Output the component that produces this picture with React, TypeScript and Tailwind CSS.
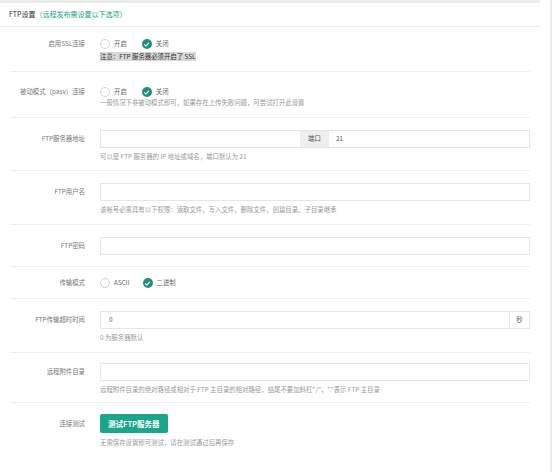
import React from 'react';

const GREEN = 'bg-[#1ba58a]';

const Radio = ({ label, checked }: { label: string; checked?: boolean }) => (
    <span className="flex items-center gap-[4px]">
        {checked ? (
            <span className="w-[10px] h-[10px] rounded-full bg-[#1e8f78] flex items-center justify-center">
                <svg viewBox="0 0 10 10" className="w-[7px] h-[7px]">
                    <path d="M2 5.2 L4.2 7.2 L8 3" fill="none" stroke="#fff" strokeWidth="1.6" strokeLinecap="round" strokeLinejoin="round" />
                </svg>
            </span>
        ) : (
            <span className="w-[10px] h-[10px] rounded-full border border-[#d2d2d2] bg-white"></span>
        )}
        <span className="text-[#666]">{label}</span>
    </span>
);

const Help = ({ children, mt = 'mt-[5px]' }: { children: React.ReactNode; mt?: string }) => (
    <div className={`${mt} leading-[8px] text-[#999] whitespace-nowrap`}>{children}</div>
);

const Row = ({
    label,
    lh,
    pad,
    last,
    children,
}: {
    label: string;
    lh: string;
    pad: string;
    last?: boolean;
    children: React.ReactNode;
}) => (
    <div className={`flex ${pad} ${last ? '' : 'border-b border-[#efefef]'}`}>
        <div className={`w-[75px] text-right text-[#777] whitespace-nowrap ${lh}`}>{label}</div>
        <div className="ml-[15px] flex-1">{children}</div>
    </div>
);

const Input = ({ value }: { value?: string }) => (
    <div className="h-[18px] border border-[#e6e6e6] bg-white px-[8px] flex items-center text-[#555]">{value}</div>
);

export default function App() {
    return (
        <div className="w-[553px] min-h-[472px] flex bg-white font-['Noto_Sans_CJK_SC',sans-serif] text-[6.4px]">
            <div className="w-[550px]">
                <div className="w-[540px] border-t-[3px] border-[#ebebeb]">
                    {/* header */}
                    <div className="h-[24px] px-[9px] flex items-center border-b border-[#ececec] text-[7px]">
                        <span className="text-[#333]">FTP设置</span>
                        <span className="text-[#1ba58a]">（远程发布需设置以下选项）</span>
                    </div>

                    <div className="px-[10px]">
                        <Row label="启用SSL连接" lh="leading-[10px]" pad="pt-[12px] pb-[10px]">
                            <div className="h-[10px] flex items-center gap-[15px]">
                                <Radio label="开启" />
                                <Radio label="关闭" checked />
                            </div>
                            <div className="mt-[4px] leading-[8px]">
                                <span className="bg-[#d9d9d9] text-[#333] whitespace-nowrap">注意：FTP 服务器必须开启了 SSL</span>
                            </div>
                        </Row>

                        <Row label="被动模式（pasv）连接" lh="leading-[10px]" pad="pt-[15px] pb-[10px]">
                            <div className="h-[10px] flex items-center gap-[15px]">
                                <Radio label="开启" />
                                <Radio label="关闭" checked />
                            </div>
                            <Help mt="mt-[2px]">一般情况下非被动模式即可，如果存在上传失败问题，可尝试打开此设置</Help>
                        </Row>

                        <Row label="FTP服务器地址" lh="leading-[18px]" pad="pt-[12px] pb-[9px]">
                            <div className="h-[18px] flex border border-[#e6e6e6]">
                                <div className="w-[199px]"></div>
                                <div className="w-[29px] bg-[#eeeeee] flex items-center justify-center text-[#555]">端口</div>
                                <div className="flex-1 px-[7px] flex items-center text-[#555]">21</div>
                            </div>
                            <Help>可以是 FTP 服务器的 IP 地址或域名，端口默认为 21</Help>
                        </Row>

                        <Row label="FTP用户名" lh="leading-[18px]" pad="pt-[12px] pb-[10px]">
                            <Input />
                            <Help>该帐号必需具有以下权限：读取文件、写入文件、删除文件、创建目录、子目录继承</Help>
                        </Row>

                        <Row label="FTP密码" lh="leading-[18px]" pad="pt-[12px] pb-[11px]">
                            <Input />
                        </Row>

                        <Row label="传输模式" lh="leading-[10px]" pad="pt-[11px] pb-[10px]">
                            <div className="h-[10px] flex items-center gap-[13px]">
                                <Radio label="ASCII" />
                                <Radio label="二进制" checked />
                            </div>
                        </Row>

                        <Row label="FTP传输超时时间" lh="leading-[18px]" pad="pt-[12px] pb-[10px]">
                            <div className="h-[18px] flex border border-[#e6e6e6]">
                                <div className="flex-1 px-[8px] flex items-center text-[#555]">0</div>
                                <div className="w-[20px] border-l border-[#e6e6e6] flex items-center justify-center text-[#666]">秒</div>
                            </div>
                            <Help>0 为服务器默认</Help>
                        </Row>

                        <Row label="远程附件目录" lh="leading-[18px]" pad="pt-[10px] pb-[8px]">
                            <Input />
                            <Help>远程附件目录的绝对路径或相对于 FTP 主目录的相对路径，结尾不要加斜杠"/"，"."表示 FTP 主目录</Help>
                        </Row>

                        <Row label="连接测试" lh="leading-[19px]" pad="pt-[11px] pb-[10px]" last>
                            <button className={`h-[19px] px-[8px] ${GREEN} text-white text-[7.5px] font-bold rounded-[2px]`}>
                                测试FTP服务器
                            </button>
                            <Help mt="mt-[6px]">无需保存设置即可测试，请在测试通过后再保存</Help>
                        </Row>
                    </div>
                </div>
            </div>
            <div className="flex-1 border-l-[2px] border-[#ececec]"></div>
        </div>
    );
}
